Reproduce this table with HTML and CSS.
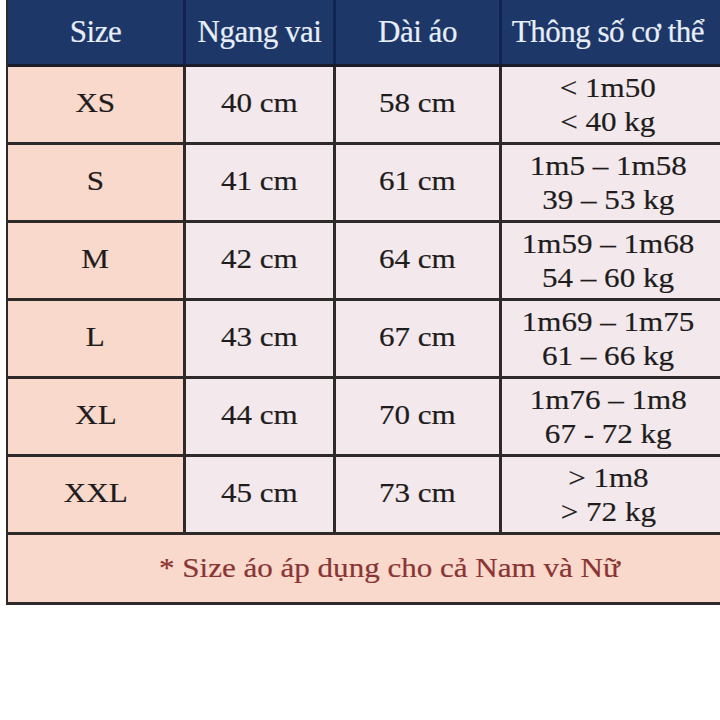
FILE: index.html
```html
<!DOCTYPE html>
<html lang="vi">
<head>
<meta charset="utf-8">
<title>Bảng size áo</title>
<link rel="stylesheet" href="styles.css">
</head>
<body>
<div class="chart">
  <div class="head">
    <div class="h">Size</div>
    <div class="h">Ngang vai</div>
    <div class="h">Dài áo</div>
    <div class="h last">Thông số cơ thể</div>
  </div>
  <div class="row">
    <div class="c size"><span class="t">XS</span></div>
    <div class="c"><span class="t">40 cm</span></div>
    <div class="c"><span class="t">58 cm</span></div>
    <div class="c body"><span class="t">&lt; 1m50<br>&lt; 40 kg</span></div>
  </div>
  <div class="row">
    <div class="c size"><span class="t">S</span></div>
    <div class="c"><span class="t">41 cm</span></div>
    <div class="c"><span class="t">61 cm</span></div>
    <div class="c body"><span class="t">1m5 – 1m58<br>39 – 53 kg</span></div>
  </div>
  <div class="row">
    <div class="c size"><span class="t">M</span></div>
    <div class="c"><span class="t">42 cm</span></div>
    <div class="c"><span class="t">64 cm</span></div>
    <div class="c body"><span class="t">1m59 – 1m68<br>54 – 60 kg</span></div>
  </div>
  <div class="row">
    <div class="c size"><span class="t">L</span></div>
    <div class="c"><span class="t">43 cm</span></div>
    <div class="c"><span class="t">67 cm</span></div>
    <div class="c body"><span class="t">1m69 – 1m75<br>61 – 66 kg</span></div>
  </div>
  <div class="row">
    <div class="c size"><span class="t">XL</span></div>
    <div class="c"><span class="t">44 cm</span></div>
    <div class="c"><span class="t">70 cm</span></div>
    <div class="c body"><span class="t">1m76 – 1m8<br>67 - 72 kg</span></div>
  </div>
  <div class="row">
    <div class="c size"><span class="t">XXL</span></div>
    <div class="c"><span class="t">45 cm</span></div>
    <div class="c"><span class="t">73 cm</span></div>
    <div class="c body"><span class="t">&gt; 1m8<br>&gt; 72 kg</span></div>
  </div>
  <div class="foot"><span class="t">* Size áo áp dụng cho cả Nam và Nữ</span></div>
</div>
</body>
</html>
```

FILE: styles.css
```css
html, body {
  margin: 0;
  padding: 0;
  background: #ffffff;
}

body {
  width: 720px;
  height: 720px;
  overflow: hidden;
  font-family: "Liberation Serif", "Times New Roman", serif;
  color: #1e1c1c;
}

.chart {
  margin-left: 6px;
  width: 714px;
  border-left: 2px solid #2e2a2a;
  display: flex;
  flex-direction: column;
}

.head {
  display: grid;
  grid-template-columns: 175px 147px 163px 1fr;
  column-gap: 3px;
  height: 64px;
  background: #0f2450;
  border-bottom: 3px solid #1a1e2c;
}

.h {
  background: #1c3768;
  color: #e8eef8;
  font-size: 31px;
  letter-spacing: -0.5px;
  -webkit-text-stroke: 0.2px #e8eef8;
  display: flex;
  align-items: center;
  justify-content: center;
}

.h.last {
  padding-right: 8px;
}

.row {
  display: grid;
  grid-template-columns: 175px 147px 163px 1fr;
  column-gap: 3px;
  height: 75px;
  background: #2e2a2a;
  border-bottom: 3px solid #2e2a2a;
}

.c {
  background: #f3e9ec;
  display: flex;
  align-items: center;
  justify-content: center;
  font-size: 27px;
  line-height: 34px;
  text-align: center;
  padding-bottom: 3px;
  -webkit-text-stroke: 0.2px #1e1c1c;
}

.c.size {
  background: #f9d9cb;
}

.c.body {
  padding-right: 8px;
  padding-bottom: 0;
}

.t {
  display: inline-block;
  transform: scaleX(1.15);
  white-space: nowrap;
}

.foot {
  height: 67px;
  background: #f9d9cc;
  border-bottom: 3px solid #2e2a2a;
  display: flex;
  align-items: center;
  justify-content: center;
  padding-left: 48px;
  font-size: 27px;
  color: #8a3434;
  -webkit-text-stroke: 0.2px #8a3434;
}
```
